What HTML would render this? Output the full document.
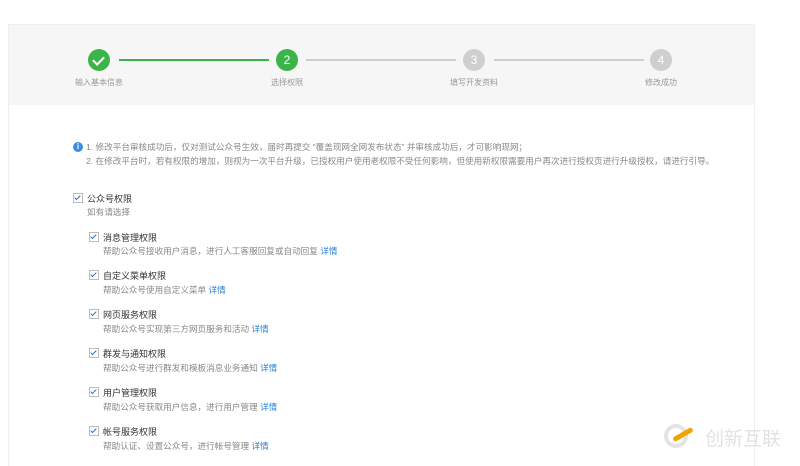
<!DOCTYPE html>
<html><head><meta charset="utf-8"><style>
html,body{margin:0;width:800px;height:466px;overflow:hidden}
body{background:#fff;font-family:"Liberation Sans","Noto Sans CJK SC",sans-serif;position:relative}
.box{position:absolute;left:8px;top:24px;width:745px;height:442px;border:1px solid #eee;border-bottom:none}
.hd{position:absolute;left:0;top:0;width:745px;height:80px;background:#f6f6f6}
.c{position:absolute;width:22px;height:22px;border-radius:50%;color:#fff;font-size:12px;text-align:center;line-height:22px;top:24px}
.g{background:#3bb54a}.gr{background:#cfcfcf}
.ln{position:absolute;top:34px;height:2px}
.lb{position:absolute;top:52px;font-size:8px;color:#999;width:100px;text-align:center}
.t{position:absolute;font-size:8.6px;color:#888;white-space:nowrap}
.cb{position:absolute;width:8px;height:8px;border:1px solid #bbb;background:#fff}
.cb:after{content:"";position:absolute;left:2px;top:0px;width:2px;height:5px;border:solid #2a6fc7;border-width:0 1.5px 1.5px 0;transform:rotate(45deg)}
.tt{position:absolute;font-size:9px;color:#333;white-space:nowrap}
.a{color:#2a7fd4}
.ck{position:absolute;left:7px;top:5px;width:5px;height:9px;border:solid #fff;border-width:0 2.5px 2.5px 0;transform:rotate(45deg)}
</style></head><body>
<div class="box"><div class="hd">
<div class="c g" style="left:79px"><div class="ck"></div></div>
<div class="ln g" style="left:110px;width:150px"></div>
<div class="c g" style="left:267px">2</div>
<div class="ln gr" style="left:297px;width:150px"></div>
<div class="c gr" style="left:454px">3</div>
<div class="ln gr" style="left:485px;width:150px"></div>
<div class="c gr" style="left:641px">4</div>
<div class="lb" style="left:40px">输入基本信息</div>
<div class="lb" style="left:228px">选择权限</div>
<div class="lb" style="left:415px">填写开发资料</div>
<div class="lb" style="left:602px">修改成功</div>
</div></div>
<div style="position:absolute;left:73px;top:142px;width:10px;height:10px;border-radius:50%;background:#3a8ee0;color:#fff;font-size:8px;text-align:center;line-height:10px;font-weight:bold">i</div>
<div class="t" style="left:86px;top:141px">1. 修改平台审核成功后，仅对测试公众号生效，届时再提交 “覆盖现网全网发布状态” 并审核成功后，才可影响现网；</div>
<div class="t" style="left:86px;top:155px">2. 在修改平台时，若有权限的增加，则视为一次平台升级，已授权用户使用老权限不受任何影响，但使用新权限需要用户再次进行授权页进行升级授权，请进行引导。</div>
<div class="cb" style="left:73px;top:193px"></div><div class="tt" style="left:87px;top:192px">公众号权限</div>
<div class="t" style="left:87px;top:206px">如有请选择</div>
<div class="cb" style="left:89px;top:232px"></div><div class="tt" style="left:103px;top:231px">消息管理权限</div>
<div class="t" style="left:103px;top:245px">帮助公众号接收用户消息，进行人工客服回复或自动回复 <span class="a">详情</span></div>
<div class="cb" style="left:89px;top:270px"></div><div class="tt" style="left:103px;top:269px">自定义菜单权限</div>
<div class="t" style="left:103px;top:284px">帮助公众号使用自定义菜单 <span class="a">详情</span></div>
<div class="cb" style="left:89px;top:309px"></div><div class="tt" style="left:103px;top:308px">网页服务权限</div>
<div class="t" style="left:103px;top:323px">帮助公众号实现第三方网页服务和活动 <span class="a">详情</span></div>
<div class="cb" style="left:89px;top:348px"></div><div class="tt" style="left:103px;top:347px">群发与通知权限</div>
<div class="t" style="left:103px;top:362px">帮助公众号进行群发和模板消息业务通知 <span class="a">详情</span></div>
<div class="cb" style="left:89px;top:387px"></div><div class="tt" style="left:103px;top:386px">用户管理权限</div>
<div class="t" style="left:103px;top:401px">帮助公众号获取用户信息，进行用户管理 <span class="a">详情</span></div>
<div class="cb" style="left:89px;top:426px"></div><div class="tt" style="left:103px;top:425px">帐号服务权限</div>
<div class="t" style="left:103px;top:440px">帮助认证、设置公众号，进行帐号管理 <span class="a">详情</span></div>
<div style="position:absolute;left:664px;top:424px;width:24px;height:24px;border-radius:50%;border:4px solid #e4e4e4;box-sizing:border-box"></div>
<div style="position:absolute;left:672px;top:432px;width:22px;height:5px;background:#f0a500;transform:rotate(-30deg);border-radius:3px"></div>
<div style="position:absolute;left:705px;top:424px;font-size:19px;color:#e2e2e2">创新互联</div>
</body></html>
